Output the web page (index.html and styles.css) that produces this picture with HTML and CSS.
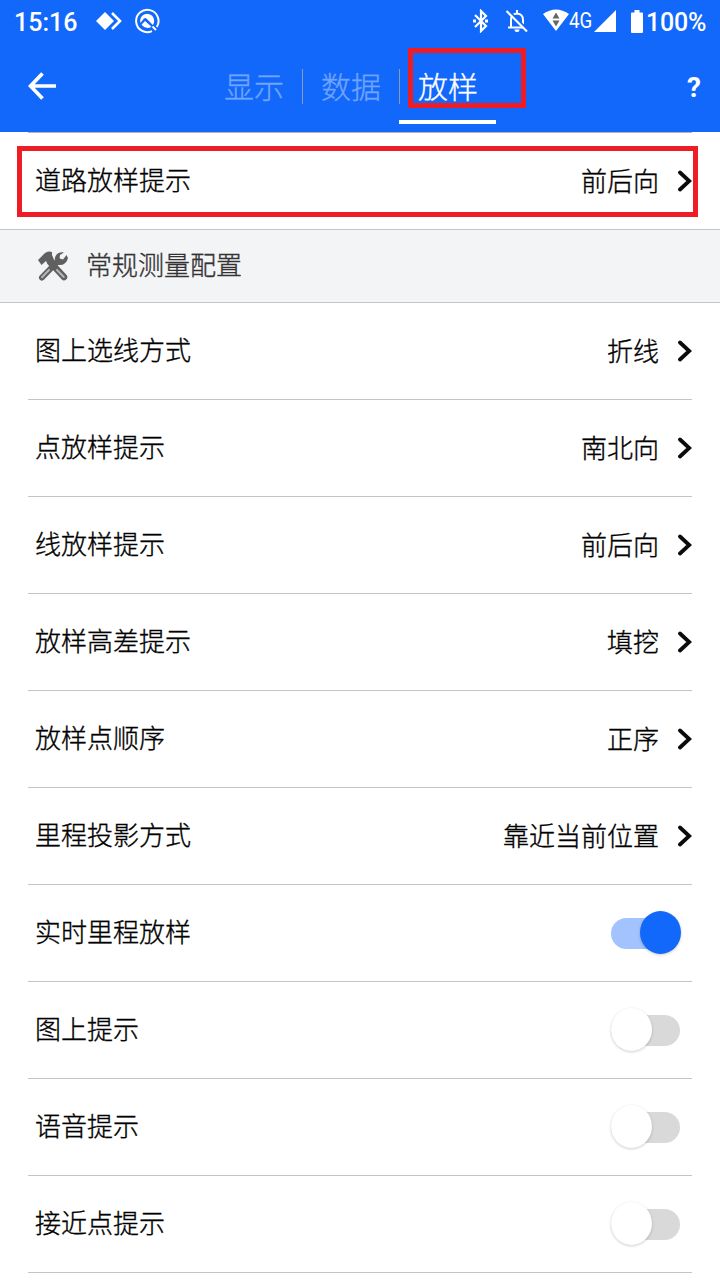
FILE: index.html
```html
<!DOCTYPE html>
<html lang="zh-CN">
<head>
<meta charset="utf-8">
<title>放样</title>
<link rel="stylesheet" href="styles.css">
</head>
<body>
<svg class="defs" width="0" height="0">
  <symbol id="chevron" viewBox="0 0 14 24"><path d="M2 3.500 11.200 12 2 20.500" fill="none" stroke="#0c0c0c" stroke-width="3.800" stroke-linecap="round"/></symbol>
</svg>
<header class="header">
  <div class="status">
    <span class="clock">15:16</span>
    <svg class="ic-diamond" width="26" height="20" viewBox="0 0 26 20"><path d="M9 1 18 10 9 19 0 10Z" fill="#fff"/><path d="M16 2 24 10 16 18" fill="none" stroke="#fff" stroke-width="2.6"/></svg>
    <svg class="ic-disc" width="26" height="26" viewBox="0 0 26 26"><path d="M18 23.200A11.200 11.200 0 1 1 22.800 19" fill="none" stroke="#fff" stroke-width="2"/><path d="M6.500 15A7 7 0 1 1 18.800 17L12.500 10.500Q11 9.500 9.500 11Z" fill="#fff"/><path d="M7.500 16.800 11 13 17.500 18.800Q12 22 7.500 16.800Z" fill="#fff"/><path d="M18.500 18.500 22 22" stroke="#fff" stroke-width="1.800"/></svg>
    <span class="spacer"></span>
    <svg class="ic-bt" width="16" height="24" viewBox="0 0 16 24"><path d="M2 6 13 17 8 22V2L13 7 2 18" fill="none" stroke="#fff" stroke-width="2.200"/><path d="M0 10.500h3v3H0zM12 10.500h3v3h-3z" fill="#fff"/></svg>
    <svg class="ic-bell" width="24" height="24" viewBox="0 0 24 24"><path d="M6 18V11Q6 5 12 4.500Q18 5 18 11V18M3 18.500H20M12 1V5" fill="none" stroke="#fff" stroke-width="2"/><path d="M9.500 20.500h5a2.500 2.500 0 0 1-5 0Z" fill="#fff"/><path d="M3 1 23 21" stroke="#1268fb" stroke-width="2"/><path d="M1.500 2 22 22.500" stroke="#fff" stroke-width="2"/></svg>
    <svg class="ic-wifi" width="26" height="22" viewBox="0 0 26 22"><path d="M0 5Q13-4 26 5L13 22Z" fill="#fff"/><path d="M9.500 9.500 13 3.500 16.500 9.500ZM9.500 11.500H16.500L13 17.500Z" fill="#666"/></svg>
    <span class="net">4G</span>
    <svg class="ic-signal" width="22" height="22" viewBox="0 0 22 22"><path d="M0 22 22 0V22Z" fill="#fff"/></svg>
    <svg class="ic-battery" width="12" height="23" viewBox="0 0 12 23"><path d="M3.500 0h5v2.500H11q1 0 1 1V22q0 1-1 1H1q-1 0-1-1V3.500q0-1 1-1h2.500z" fill="#fff"/></svg>
    <span class="pct">100%</span>
  </div>
  <div class="nav">
    <svg class="back" width="28" height="28" viewBox="0 0 28 28"><path d="M14.500 1.500 2.500 14 14.500 26.500M2.500 14H28" fill="none" stroke="#fff" stroke-width="3.700"/></svg>
    <nav class="tabs">
      <span class="tab">显示</span>
      <span class="tab">数据</span>
      <span class="tab active">放样</span>
    </nav>
    <span class="help">?</span>
  </div>
  <div class="mark mark-tab"></div>
</header>
<main>
  <div class="row first"><span class="label">道路放样提示</span><span class="value">前后向</span><svg class="chev"><use href="#chevron"/></svg><div class="mark mark-row"></div></div>
  <div class="section">
    <svg class="tools" width="32" height="32" viewBox="0 0 32 32"><path d="M13 12 27 27" stroke="#606060" stroke-width="6.500" stroke-linecap="round"/><path d="M20 20 26.800 27" stroke="#b5b5b5" stroke-width="2" stroke-linecap="round"/><path d="M5 27.500 21 11" stroke="#606060" stroke-width="6" stroke-linecap="round"/><path d="M5 27.300 12 20" stroke="#b5b5b5" stroke-width="2" stroke-linecap="round"/><path d="M27 2.500Q20 1.500 18 7.500L17.500 12 21 15Q29 16 31 8L29.500 5 26 9.500 22.500 8.500 23 5Z" fill="#606060"/><path d="M1 10 6 5Q10 0 15 2V5L18 12 14 16.500 9 11 4.500 15Z" fill="#606060"/></svg>
    <span class="label">常规测量配置</span>
  </div>
  <div class="row"><span class="label">图上选线方式</span><span class="value">折线</span><svg class="chev"><use href="#chevron"/></svg></div>
  <div class="row"><span class="label">点放样提示</span><span class="value">南北向</span><svg class="chev"><use href="#chevron"/></svg></div>
  <div class="row"><span class="label">线放样提示</span><span class="value">前后向</span><svg class="chev"><use href="#chevron"/></svg></div>
  <div class="row"><span class="label">放样高差提示</span><span class="value">填挖</span><svg class="chev"><use href="#chevron"/></svg></div>
  <div class="row"><span class="label">放样点顺序</span><span class="value">正序</span><svg class="chev"><use href="#chevron"/></svg></div>
  <div class="row"><span class="label">里程投影方式</span><span class="value">靠近当前位置</span><svg class="chev"><use href="#chevron"/></svg></div>
  <div class="row"><span class="label">实时里程放样</span><span class="switch on"><i class="knob"></i></span></div>
  <div class="row"><span class="label">图上提示</span><span class="switch"><i class="knob"></i></span></div>
  <div class="row"><span class="label">语音提示</span><span class="switch"><i class="knob"></i></span></div>
  <div class="row"><span class="label">接近点提示</span><span class="switch"><i class="knob"></i></span></div>
</main>
</body>
</html>
```
FILE: styles.css
```css
* { box-sizing: border-box; }
body {
  margin: 0;
  width: 720px;
  height: 1280px;
  overflow: hidden;
  background: #fff;
  color: #000;
  font: 300 26px/36px "Noto Sans CJK SC", sans-serif;
}
svg { display: block; flex: none; }
.defs { position: absolute; }
.header { position: relative; height: 132px; background: #1268fb; color: #fff; }
.status {
  display: flex;
  align-items: center;
  height: 42px;
  padding: 0 14px 0 14px;
  font-family: Roboto, sans-serif;
  font-weight: 500;
}
.clock { width: 82px; font-size: 25px; padding-top: 4px; }
.ic-disc { margin-left: 12px; }
.spacer { flex: 1; }
.ic-bt { margin-right: 1px; }
.ic-bell { margin-left: 15px; }
.ic-wifi { margin-left: 14px; margin-top: -2px; }
.net { width: 24px; font-size: 22px; font-weight: 400; transform: scaleX(0.85); transform-origin: left; white-space: nowrap; }
.ic-signal { margin-left: 1px; }
.ic-battery { margin-left: 15px; }
.pct { width: 60px; margin-left: 3px; font-size: 25px; letter-spacing: -0.2px; padding-top: 4px; white-space: nowrap; }
.nav { display: flex; height: 90px; justify-content: space-between; padding: 0 19px 0 28px; }
.back { margin-top: 30px; }
.tabs { display: flex; margin-left: 149px; margin-right: auto; height: 82px; }
.tab {
  position: relative;
  width: 97px;
  padding: 25px 0 0 1px;
  text-align: center;
  font-size: 30px;
  -webkit-text-stroke: 0.35px currentColor;
  color: #71a4fd;
}
.tab + .tab::before {
  content: "";
  position: absolute;
  left: 0;
  top: 27px;
  width: 1px;
  height: 35px;
  background: #8b98bd;
}
.tab.active { color: #fff; border-bottom: 4px solid #fff; }
.help { padding-top: 28px; font: 700 28px/36px Roboto, sans-serif; }
.mark { position: absolute; border: 5px solid #ee1c25; }
.mark-tab { left: 408px; top: 48px; width: 118px; height: 60px; }
.mark-row { left: -11px; top: 13px; width: 681px; height: 71px; }
.row {
  display: flex;
  align-items: center;
  height: 97px;
  margin: 0 28px;
  padding-left: 7px;
  border-bottom: 1px solid #c4c4c4;
}
.row.first {
  position: relative;
  height: 97px;
  border-top: 1px solid #b5b5b5;
  border-bottom: 0;
}
.label, .value { -webkit-text-stroke: 0.35px currentColor; }
.label { padding-bottom: 4px; }
.value { margin-left: auto; padding-bottom: 2px; }
.chev { width: 14px; height: 24px; margin-left: 19px; }
.section {
  display: flex;
  align-items: center;
  height: 74px;
  padding: 0 37px;
  gap: 17px;
  background: #f3f4f6;
  border-top: 1px solid #c4c4c4;
  border-bottom: 1px solid #c4c4c4;
  color: #333;
}
.switch {
  position: relative;
  width: 69px;
  height: 31px;
  margin: 0 12px 0 auto;
  border-radius: 16px;
  background: #d9d9d9;
}
.switch.on { background: #a2c3fd; }
.knob {
  position: absolute;
  left: 0;
  top: -7px;
  width: 41px;
  height: 43px;
  border-radius: 50%;
  background: #fff;
  box-shadow: 0 1px 3px rgba(0, 0, 0, 0.2);
}
.on .knob { left: 29px; background: #1268fb; }
```
